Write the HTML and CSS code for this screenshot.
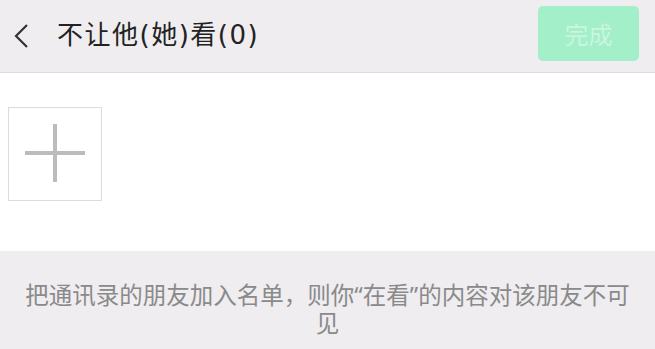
FILE: index.html
```html
<!DOCTYPE html>
<html lang="zh">
<head>
<meta charset="utf-8">
<link rel="stylesheet" href="styles.css">
</head>
<body>
<div class="header">
  <svg class="back" width="20" height="26" viewBox="0 0 20 26"><path d="M15 2 L4 13 L15 24" fill="none" stroke="#333" stroke-width="2.2"/></svg>
  <div class="title">不让他(她)看(0)</div>
  <div class="done">完成</div>
</div>
<div class="content">
  <div class="add">
    <svg width="60" height="60" viewBox="0 0 60 60"><rect x="28" y="0" width="4" height="58" fill="#bcbcbc"/><rect x="0" y="27" width="60" height="4" fill="#bcbcbc"/></svg>
  </div>
</div>
<div class="footer">
  <p class="note">把通讯录的朋友加入名单，则你“在看”的内容对该朋友不可见</p>
</div>
</body>
</html>
```
FILE: styles.css
```css
html, body {
  margin: 0;
  padding: 0;
  background: #efedf0;
  font-family: "Noto Sans CJK SC", "Noto Sans", sans-serif;
}
.header {
  height: 72px;
  border-bottom: 1px solid #dcdadd;
  display: flex;
  align-items: center;
  background: #efedf0;
}
.back {
  margin-left: 12px;
  flex: none;
}
.title {
  margin-left: 25px;
  font-family: "DejaVu Sans", "Noto Sans CJK SC", sans-serif;
  font-size: 26px;
  letter-spacing: 1.5px;
  color: #222;
  flex: 1;
  line-height: 1;
  margin-top: -2px;
}
.done {
  width: 101px;
  height: 55px;
  margin-right: 16px;
  margin-top: -6px;
  border-radius: 5px;
  background: #a3efc9;
  color: #c8f6df;
  font-size: 24px;
  display: flex;
  align-items: center;
  justify-content: center;
}
.content {
  background: #fff;
  height: 178px;
  padding: 34px 0 0 8px;
  box-sizing: border-box;
}
.add {
  width: 94px;
  height: 94px;
  box-sizing: border-box;
  border: 1px solid #dcdcdc;
  display: flex;
  align-items: center;
  justify-content: center;
}
.footer {
  padding: 30px 22px 0;
}
.note {
  margin: 0;
  text-align: center;
  font-family: "Noto Sans", "Noto Sans CJK SC", sans-serif;
  font-size: 23.5px;
  line-height: 28px;
  color: #8a8a8a;
}
```
